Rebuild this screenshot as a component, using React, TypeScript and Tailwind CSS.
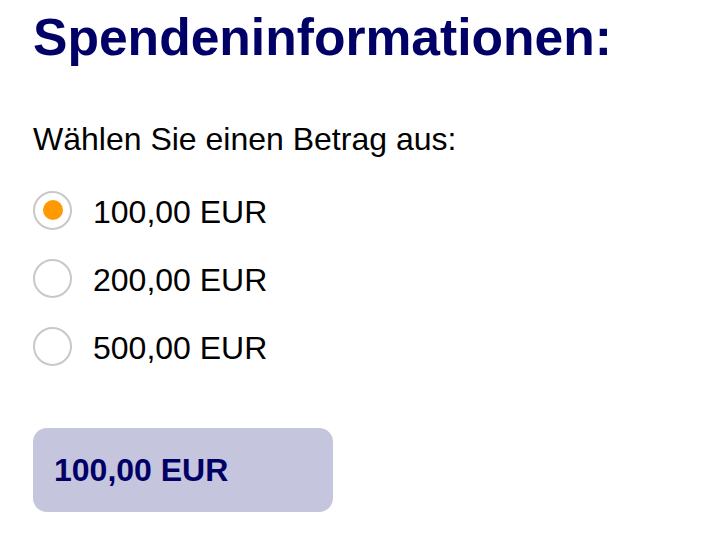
import React, { useState } from "react";

const amounts = ["100,00 EUR", "200,00 EUR", "500,00 EUR"];

export default function App() {
  const [selected, setSelected] = useState(0);
  return (
    <div
      className="min-h-[552px] w-[706px] bg-white pl-[33px] pt-[11px] text-black"
      style={{ fontFamily: '"Liberation Sans", Arial, Helvetica, sans-serif' }}
    >
      <h1 className="text-[51.6px] leading-[52px] font-bold text-[#000066]">
        Spendeninformationen:
      </h1>
      <p className="mt-[60px] text-[32px] leading-[32px]">Wählen Sie einen Betrag aus:</p>
      <div className="mt-[35px] flex flex-col gap-[28px]">
        {amounts.map((a, i) => (
          <label
            key={a}
            className="flex h-[40px] cursor-pointer items-center"
            onClick={() => setSelected(i)}
          >
            <span className="flex h-[39px] w-[39px] items-center justify-center rounded-full border-2 border-[#c8c8c8] bg-white">
              {selected === i && (
                <span className="h-[20px] w-[20px] rounded-full bg-[#ff9900]" />
              )}
            </span>
            <span className="ml-[21px] pt-[3px] text-[32px] leading-[32px]">{a}</span>
          </label>
        ))}
      </div>
      <div className="mt-[62px] flex h-[84px] w-[300px] items-center rounded-[14px] bg-[#c5c5de] pl-[21px]">
        <span className="text-[32px] leading-[32px] font-bold text-[#000066]">
          {amounts[selected]}
        </span>
      </div>
    </div>
  );
}
